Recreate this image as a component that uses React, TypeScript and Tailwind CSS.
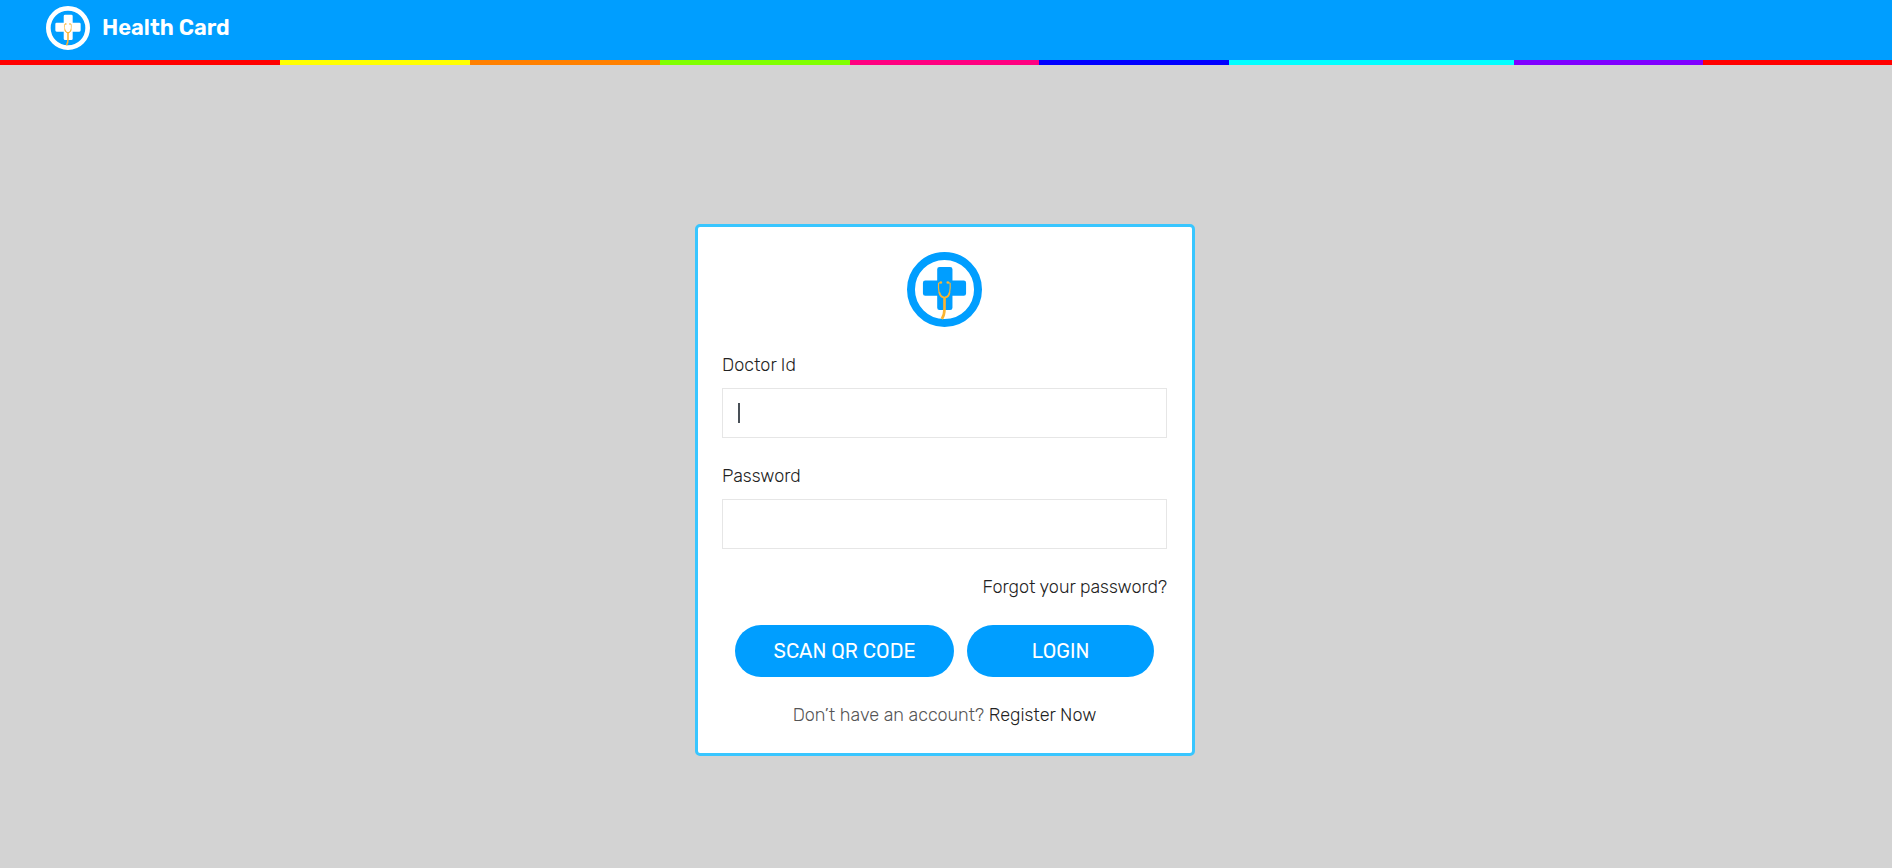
import { useState } from "react";

const stripes = [
  { color: "bg-[#ff0000]", grow: 280 },
  { color: "bg-[#ffff00]", grow: 190 },
  { color: "bg-[#ff8000]", grow: 190 },
  { color: "bg-[#80ff00]", grow: 190 },
  { color: "bg-[#ff0080]", grow: 189 },
  { color: "bg-[#0000ff]", grow: 190 },
  { color: "bg-[#00ffff]", grow: 285 },
  { color: "bg-[#8000ff]", grow: 189 },
  { color: "bg-[#ff0000]", grow: 189 },
];

function Logo({ className }: { className: string }) {
  return (
    <svg viewBox="0 0 226 226" className={className} fill="none" aria-hidden="true">
      <circle cx="113" cy="113" r="101" stroke="currentColor" strokeWidth="24" />
      <path
        fill="currentColor"
        d="M98 45h32a7 7 0 0 1 7 7v34h34a7 7 0 0 1 7 7v32a7 7 0 0 1-7 7h-34v36a7 7 0 0 1-7 7H98a7 7 0 0 1-7-7v-36H55a7 7 0 0 1-7-7V93a7 7 0 0 1 7-7h36V52a7 7 0 0 1 7-7z"
      />
      <g stroke="#fbb431" strokeLinecap="round" strokeLinejoin="round">
        <path
          strokeWidth="3.5"
          d="M101 92l-6 2c-1 12 0 21 2 30 2 8 7 13 16 13s14-5 15-13c2-9 3-18 2-30l-6-2"
        />
        <path strokeWidth="5" d="M98 123c2 8 7 14 15 14s13-6 15-14" />
        <path strokeWidth="8" strokeLinecap="butt" d="M113 137v34c0 12-2 22-8 31" />
      </g>
      <circle cx="102" cy="92" r="4" fill="#fbb431" />
      <circle cx="123" cy="92" r="4" fill="#fbb431" />
    </svg>
  );
}

const inputClass =
  "block h-[50px] w-full border border-[#e6e6e6] bg-white px-[15px] text-lg text-[#495057] outline-none";

export default function App() {
  const [doctorId, setDoctorId] = useState("");

  return (
    <div className="flex min-h-screen flex-col bg-[#d3d3d3] font-['Rubik','Roboto',sans-serif] text-lg leading-6 font-light text-[#222]">
      <header>
        <div className="flex h-[60px] items-start bg-[#009eff] px-[46px] pt-1.5">
          <a href="#" className="flex h-11 items-center gap-3 text-white">
            <Logo className="size-11" />
            <span className="text-[22px] font-semibold">Health Card</span>
          </a>
        </div>
        <div className="flex h-[5px]">
          {stripes.map((s, i) => (
            <div key={i} className={s.color} style={{ flex: `${s.grow} 0 0` }} />
          ))}
        </div>
      </header>

      <main className="flex grow items-center justify-center pt-[46px] pr-0.5">
        <form
          className="flex w-full max-w-[500px] flex-col gap-[26px] rounded-[5px] border-[3px] border-[#38c6ff] bg-white pt-[25px] pr-[25px] pb-[26px] pl-6"
          onSubmit={(e) => e.preventDefault()}
        >
          <Logo className="size-[75px] self-center text-[#009eff]" />

          <div className="flex flex-col gap-[11px]">
            <label htmlFor="doctor-id">Doctor Id</label>
            <div className="relative">
              <input
                id="doctor-id"
                type="text"
                value={doctorId}
                onChange={(e) => setDoctorId(e.target.value)}
                className={inputClass}
              />
              {doctorId === "" && (
                <span className="pointer-events-none absolute top-[15px] left-4 h-5 w-0.5 bg-[#495057]" />
              )}
            </div>
          </div>

          <div className="flex flex-col gap-[11px]">
            <label htmlFor="password">Password</label>
            <input id="password" type="password" className={inputClass} />
          </div>

          <a href="#" className="self-end">
            Forgot your password?
          </a>

          <div className="flex justify-center gap-[13px] text-xl font-normal text-white">
            <button type="button" className="h-[52px] w-[219px] rounded-full bg-[#009eff]">
              SCAN QR CODE
            </button>
            <button type="submit" className="h-[52px] w-[187px] rounded-full bg-[#009eff]">
              LOGIN
            </button>
          </div>

          <p className="text-center text-[#555]">
            Don’t have an account?{" "}
            <a href="#" className="text-[#222]">
              Register Now
            </a>
          </p>
        </form>
      </main>
    </div>
  );
}
